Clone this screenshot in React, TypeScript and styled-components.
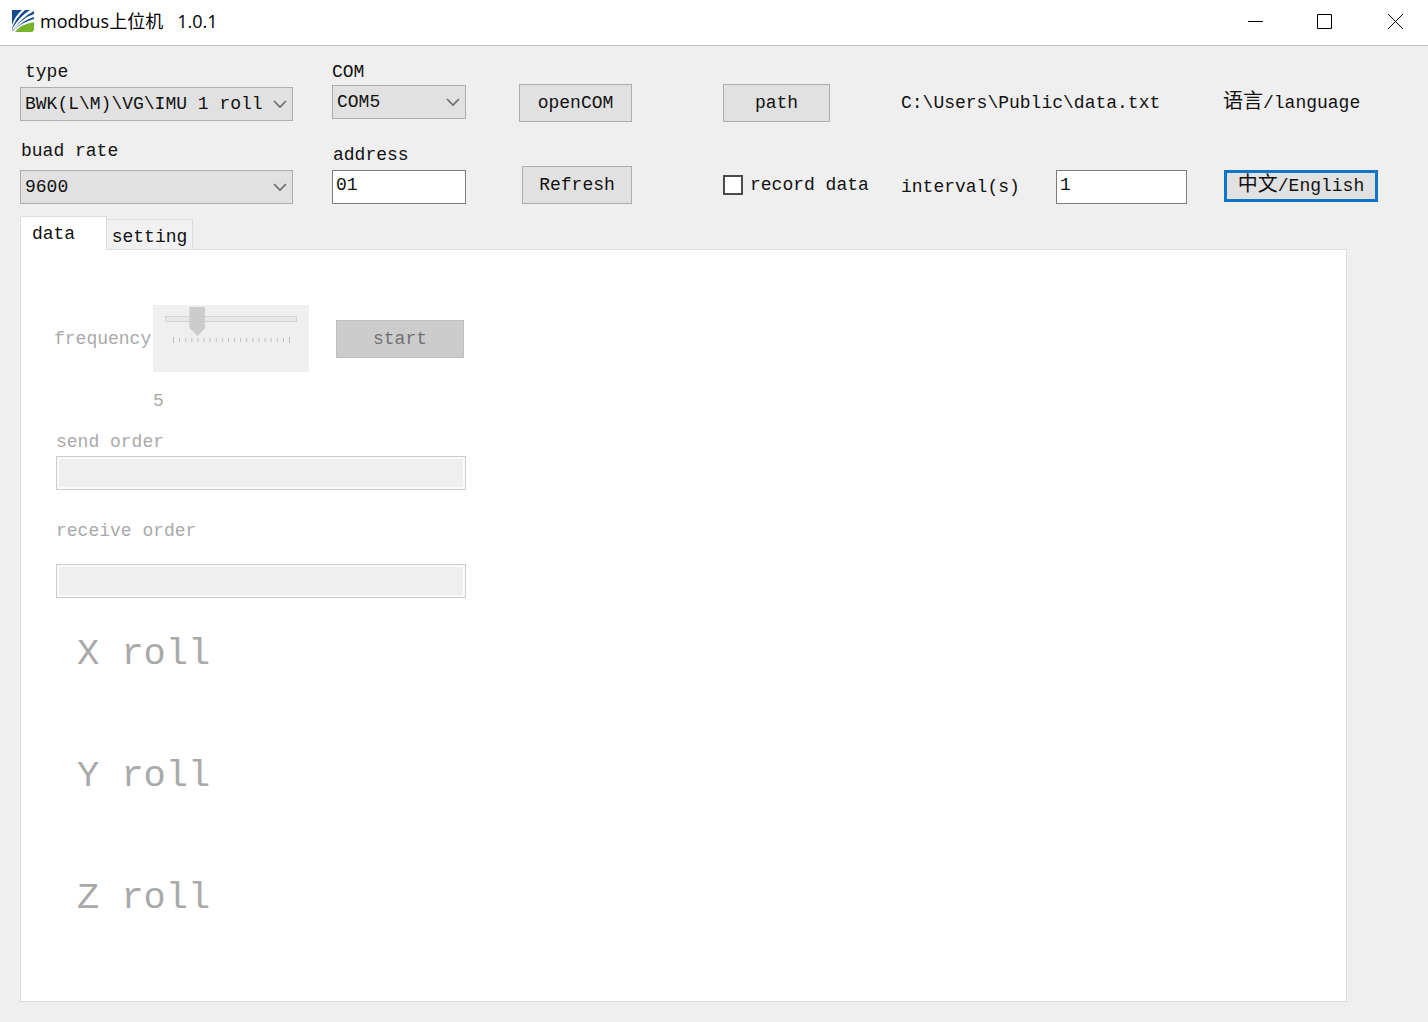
import React, { useState } from "react";
import styled, { createGlobalStyle, css } from "styled-components";

const mono = `"Liberation Mono", "Noto Sans CJK SC", monospace`;

const color = {
  face: "#efefef",
  control: "#e1e1e1",
  border: "#adadad",
  ink: "#111111",
  disabled: "#a9a9a9",
  focus: "#0f75c9",
  panelLine: "#dcdcdc",
};

const GlobalStyle = createGlobalStyle`
  *, *::before, *::after { box-sizing: border-box; }
  body { margin: 0; background: ${color.face}; }
  button, input, select { font: inherit; color: inherit; border-radius: 0; margin: 0; }
`;

const Window = styled.div`
  min-height: 100vh;
  display: flex;
  flex-direction: column;
  background: ${color.face};
  color: ${color.ink};
  font: 18px/24px ${mono};
`;

const TitleBar = styled.header`
  display: flex;
  align-items: center;
  height: 46px;
  padding: 0 0 4px 12px;
  gap: 6px;
  background: #ffffff;
  border-bottom: 1px solid #c3c3c3;
`;

const Title = styled.h1`
  flex: 1;
  margin: 0;
  color: #000000;
  font: 400 18px/24px "Open Sans", "Noto Sans CJK SC", sans-serif;
  white-space: pre;
`;

const WindowButtons = styled.div`
  display: flex;
  gap: 4px;
`;

const WindowButton = styled.button`
  display: grid;
  place-items: center;
  width: 66px;
  height: 40px;
  padding: 0;
  border: 0;
  background: transparent;
`;

const Toolbar = styled.form`
  display: grid;
  grid-template-columns: 312fr 187fr 204fr 178fr 322fr 185fr;
  grid-template-rows: 62px 62px;
  row-gap: 20px;
  padding: 14px 20px 12px;
`;

const Field = styled.div<{ $gap: number; $end: number; $bottom?: boolean }>`
  display: flex;
  flex-direction: column;
  gap: ${(p) => p.$gap}px;
  padding-right: ${(p) => p.$end}px;
  align-self: ${(p) => (p.$bottom ? "end" : "start")};
`;

const Label = styled.label<{ $indent?: number }>`
  padding-left: ${(p) => p.$indent ?? 0}px;
  white-space: nowrap;
`;

const SelectBox = styled.div`
  position: relative;
  svg {
    position: absolute;
    right: 6px;
    top: 12px;
    pointer-events: none;
  }
`;

const Select = styled.select`
  appearance: none;
  display: block;
  width: 100%;
  height: 34px;
  padding: 0 20px 0 4px;
  border: 1px solid ${color.border};
  background: ${color.control};
`;

const TextInput = styled.input`
  display: block;
  width: 100%;
  height: 34px;
  padding: 0 4px 4px 3px;
  border: 1px solid #7d7d7d;
  background: #ffffff;

  &:disabled {
    border-color: #cccccc;
    background: ${color.face};
    box-shadow: inset 0 0 0 2px #fafafa;
  }
`;

const Button = styled.button<{ $width: number; $focused?: boolean }>`
  width: ${(p) => p.$width}px;
  height: ${(p) => (p.$focused ? 32 : 38)}px;
  padding: 0;
  border: 1px solid ${color.border};
  background: ${color.control};
  white-space: nowrap;

  ${(p) =>
    p.$focused &&
    css`
      border: 3px solid ${color.focus};
    `}

  &:disabled {
    border-color: #bfbfbf;
    background: #cccccc;
    color: #707070;
  }
`;

const Cell = styled.div<{ $tall?: boolean; $align?: string; $indent?: number }>`
  display: flex;
  align-items: ${(p) => p.$align ?? "center"};
  align-self: end;
  height: ${(p) => (p.$tall ? 38 : 34)}px;
  padding-left: ${(p) => p.$indent ?? 0}px;
  white-space: nowrap;
`;

const Han = styled.span`
  font-size: 20px;
  line-height: 24px;
`;

const CheckLabel = styled.label`
  display: flex;
  align-items: center;
  gap: 7px;
`;

const CheckBox = styled.input`
  appearance: none;
  width: 20px;
  height: 20px;
  border: 2px solid #4a4a4a;
  background: #ffffff;

  &:checked {
    background: #4a4a4a;
    box-shadow: inset 0 0 0 3px #ffffff;
  }
`;

const IntervalCell = styled(Cell)`
  justify-content: space-between;
  padding-right: 36px;
`;

const IntervalBox = styled.div`
  width: 131px;
`;

const Tabs = styled.div`
  display: flex;
  align-items: flex-start;
  height: 33px;
  padding: 0 20px;
`;

const Tab = styled.button<{ $active: boolean }>`
  position: relative;
  z-index: ${(p) => (p.$active ? 1 : 0)};
  width: ${(p) => (p.$active ? 87 : 86)}px;
  height: ${(p) => (p.$active ? 34 : 30)}px;
  margin-top: ${(p) => (p.$active ? 0 : 3)}px;
  padding: ${(p) => (p.$active ? "0 20px 0 0" : "4px 0 0")};
  border: 1px solid ${color.panelLine};
  border-bottom: 0;
  background: ${(p) => (p.$active ? "#ffffff" : "#f1f1f1")};
  white-space: nowrap;

  & + & {
    border-left: 0;
  }
`;

const Panel = styled.main`
  flex: 1;
  margin: 0 81px 20px 20px;
  padding: 55px 33px 40px;
  border: 1px solid ${color.panelLine};
  background: #ffffff;
  color: ${color.disabled};
`;

const DataForm = styled.div`
  display: flex;
  flex-direction: column;
`;

const FrequencyRow = styled.div`
  display: grid;
  grid-template-columns: 99px 156px 128px;
  align-items: center;

  button {
    margin-left: 27px;
  }
`;

const SliderBox = styled.div`
  height: 67px;
  padding: 2px 12px;
  background: ${color.face};

  svg {
    display: block;
    margin: 0 8px;
  }
`;

const Slider = styled.input`
  appearance: none;
  display: block;
  width: 132px;
  height: 29px;
  background: transparent;

  &::-webkit-slider-runnable-track {
    height: 29px;
    background:
      linear-gradient(#e7e7e7, #e7e7e7) 1px 10px / 130px 4px no-repeat,
      linear-gradient(#d3d3d3, #d3d3d3) 0 9px / 132px 6px no-repeat;
  }

  &::-webkit-slider-thumb {
    appearance: none;
    width: 16px;
    height: 29px;
    border: 0;
    background: #cccccc;
    clip-path: polygon(0 0, 100% 0, 100% 72%, 50% 100%, 0 72%);
  }
`;

const SliderValue = styled.output`
  padding: 17px 0 17px 99px;
`;

const Order = styled.div<{ $gap: number }>`
  display: flex;
  flex-direction: column;
  gap: ${(p) => p.$gap}px;
  width: 412px;
  padding-left: 2px;
  margin-bottom: 29px;
`;

const Rolls = styled.div`
  display: flex;
  flex-direction: column;
  gap: 74px;
  padding: 3px 0 0 23px;
  font-size: 37px;
  line-height: 48px;
`;

const Logo = () => (
  <svg width="22" height="22" viewBox="0 0 22 22" aria-hidden="true">
    <path d="M0 0H22V9Q10 12 1 21L0 20Z" fill="#124a8f" />
    <g fill="#ffffff">
      <path d="M0 15Q3 6 10 0H13Q4 8 0 18Z" />
      <path d="M0 19Q7 7 18 0H22V1Q9 8 1 20Z" />
      <path d="M1 20Q10 8 22 4V7Q11 10 1 21Z" />
    </g>
    <path d="M22 12V19Q22 22 19 22H3Q9 14 22 12Z" fill="#76b52a" />
  </svg>
);

const Chevron = () => (
  <svg width="14" height="10" viewBox="0 0 14 10" fill="none" aria-hidden="true">
    <path d="M1 2L7 8L13 2" stroke="#6b6b6b" strokeWidth="1.6" />
  </svg>
);

const Glyph = ({ d }: { d: string }) => (
  <svg width="16" height="16" viewBox="0 0 16 16" fill="none" aria-hidden="true">
    <path d={d} stroke="#000000" />
  </svg>
);

const Ticks = () => (
  <svg width="117" height="8" viewBox="0 0 117 8" aria-hidden="true">
    {Array.from({ length: 20 }, (_, i) => (
      <rect
        key={i}
        x={(i * 116) / 19}
        y={i % 19 === 0 ? 1 : 2}
        width="1"
        height={i % 19 === 0 ? 6 : 4}
        fill="#bdbdbd"
      />
    ))}
  </svg>
);

export default function App() {
  const [tab, setTab] = useState("data");

  return (
    <Window>
      <GlobalStyle />
      <TitleBar>
        <Logo />
        <Title>{"modbus上位机   1.0.1"}</Title>
        <WindowButtons>
          <WindowButton aria-label="Minimize">
            <Glyph d="M1 8.5H16" />
          </WindowButton>
          <WindowButton aria-label="Maximize">
            <Glyph d="M0.5 1.5H14.5V15.5H0.5Z" />
          </WindowButton>
          <WindowButton aria-label="Close">
            <Glyph d="M1 1L16 16M16 1L1 16" />
          </WindowButton>
        </WindowButtons>
      </TitleBar>

      <Toolbar onSubmit={(e) => e.preventDefault()}>
        <Field $gap={3} $end={39}>
          <Label htmlFor="type" $indent={5}>type</Label>
          <SelectBox>
            <Select id="type" defaultValue="imu">
              <option value="imu">{"BWK(L\\M)\\VG\\IMU 1 roll"}</option>
            </Select>
            <Chevron />
          </SelectBox>
        </Field>
        <Field $gap={1} $end={53}>
          <Label htmlFor="com">COM</Label>
          <SelectBox>
            <Select id="com" defaultValue="COM5">
              <option>COM5</option>
            </Select>
            <Chevron />
          </SelectBox>
        </Field>
        <Cell $tall>
          <Button type="button" $width={113}>openCOM</Button>
        </Cell>
        <Cell $tall>
          <Button type="button" $width={107}>path</Button>
        </Cell>
        <Cell $tall>{"C:\\Users\\Public\\data.txt"}</Cell>
        <Cell $tall>
          <Han>语言</Han>/language
        </Cell>

        <Field $gap={7} $end={39} $bottom>
          <Label htmlFor="baud" $indent={1}>buad rate</Label>
          <SelectBox>
            <Select id="baud" defaultValue="9600">
              <option>9600</option>
            </Select>
            <Chevron />
          </SelectBox>
        </Field>
        <Field $gap={3} $end={53} $bottom>
          <Label htmlFor="address" $indent={1}>address</Label>
          <TextInput id="address" defaultValue="01" />
        </Field>
        <Cell $tall $indent={3}>
          <Button type="button" $width={110}>Refresh</Button>
        </Cell>
        <Cell $tall>
          <CheckLabel>
            <CheckBox type="checkbox" />
            record data
          </CheckLabel>
        </Cell>
        <IntervalCell>
          <label htmlFor="interval">interval(s)</label>
          <IntervalBox>
            <TextInput id="interval" defaultValue="1" />
          </IntervalBox>
        </IntervalCell>
        <Cell $align="flex-start" $indent={1}>
          <Button type="button" $width={154} $focused>
            <Han>中文</Han>/English
          </Button>
        </Cell>
      </Toolbar>

      <Tabs role="tablist">
        <Tab role="tab" aria-selected={tab === "data"} $active={tab === "data"} onClick={() => setTab("data")}>
          data
        </Tab>
        <Tab role="tab" aria-selected={tab === "setting"} $active={tab === "setting"} onClick={() => setTab("setting")}>
          setting
        </Tab>
      </Tabs>
      <Panel role="tabpanel">
        {tab === "data" && (
          <DataForm>
            <FrequencyRow>
              <label htmlFor="frequency">frequency</label>
              <SliderBox>
                <Slider id="frequency" type="range" min={1} max={20} defaultValue={5} disabled />
                <Ticks />
              </SliderBox>
              <Button type="button" $width={128} disabled>start</Button>
            </FrequencyRow>
            <SliderValue htmlFor="frequency">5</SliderValue>
            <Order $gap={2}>
              <label htmlFor="send">send order</label>
              <TextInput id="send" disabled />
            </Order>
            <Order $gap={21}>
              <label htmlFor="receive">receive order</label>
              <TextInput id="receive" disabled />
            </Order>
            <Rolls>
              <div>X roll</div>
              <div>Y roll</div>
              <div>Z roll</div>
            </Rolls>
          </DataForm>
        )}
      </Panel>
    </Window>
  );
}
